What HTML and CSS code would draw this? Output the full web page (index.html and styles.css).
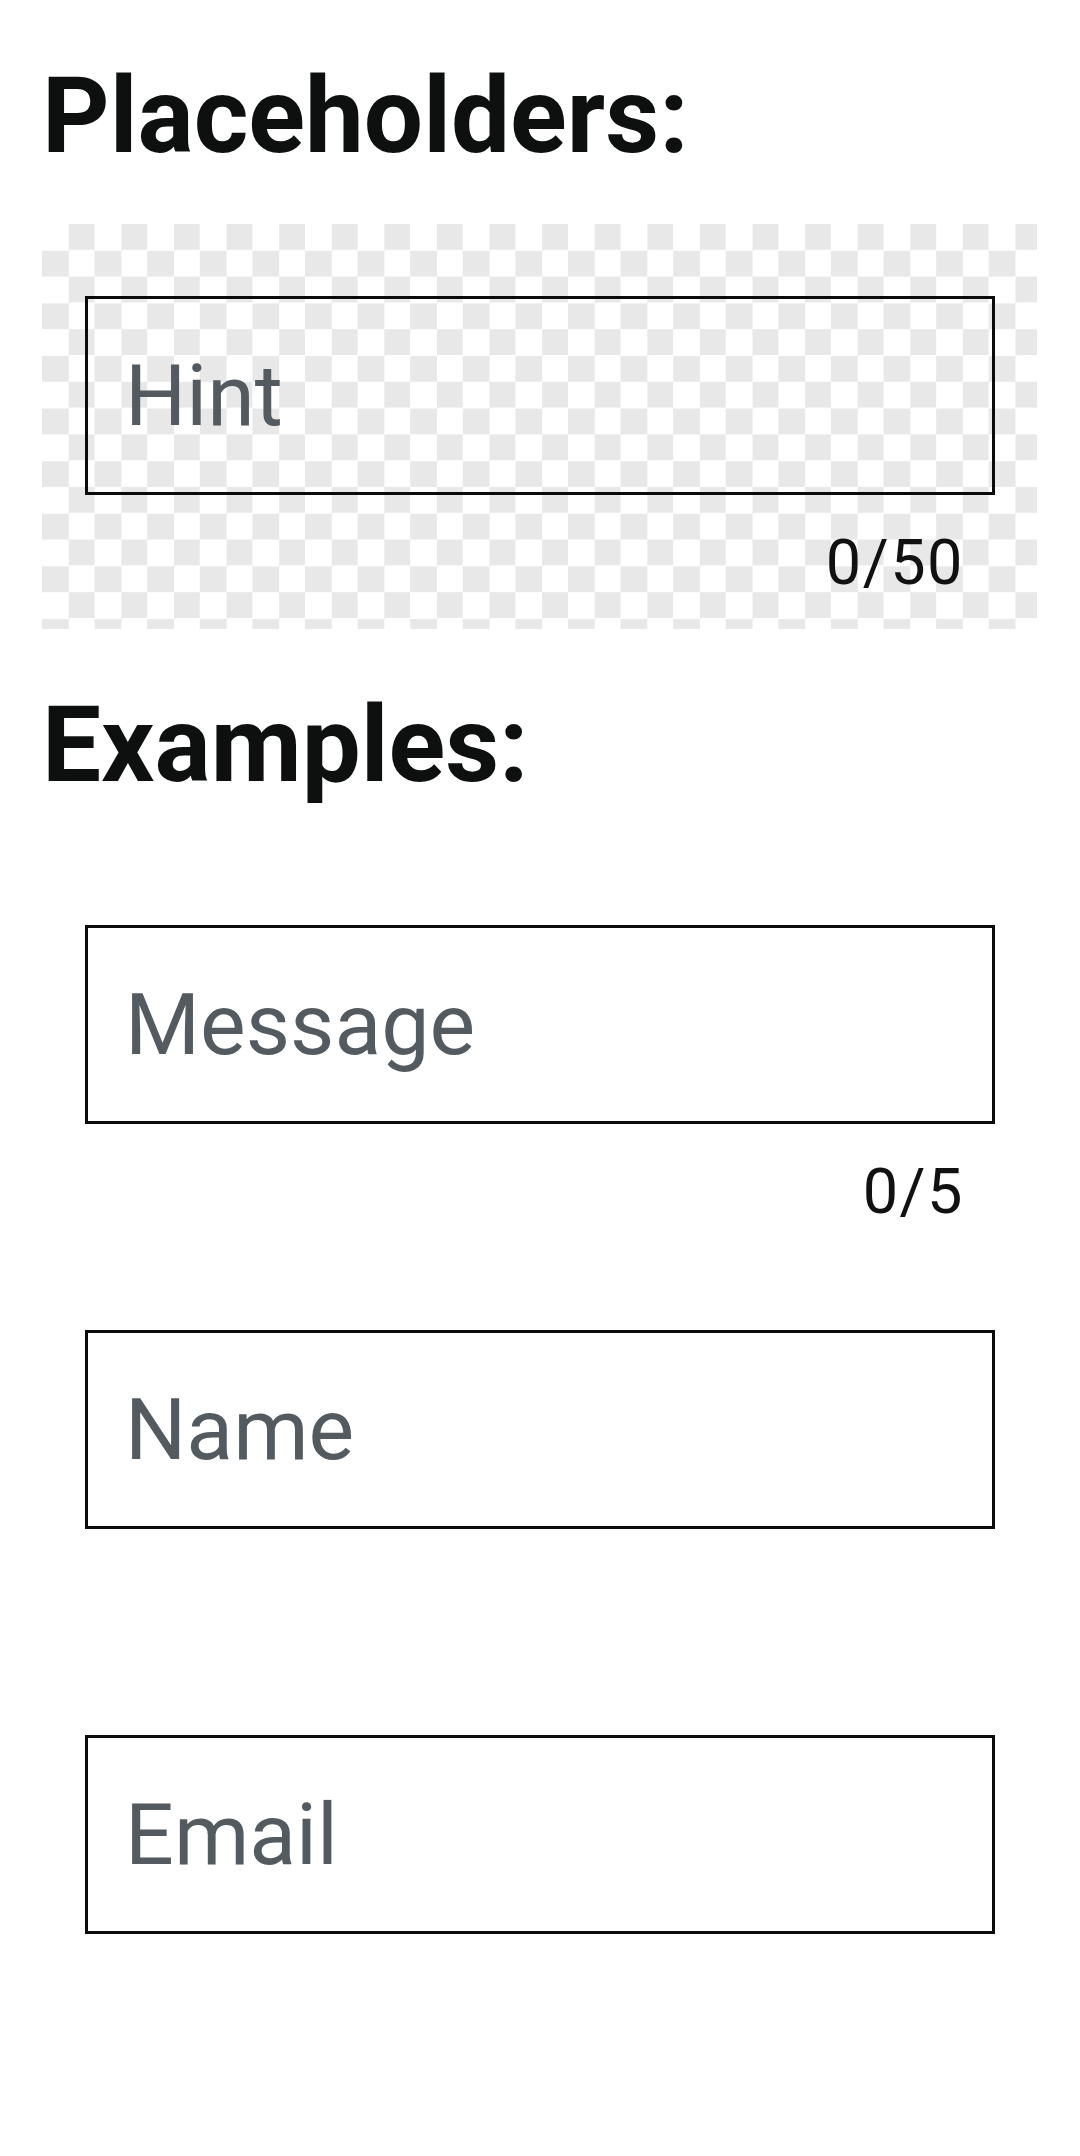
FILE: index.html
```html
<!DOCTYPE html>
<html lang="en">
<head>
<meta charset="utf-8">
<title>Placeholders</title>
<link rel="stylesheet" href="styles.css">
</head>
<body>
<main class="page">
  <section class="section">
    <h1 class="section-title">Placeholders:</h1>
    <div class="field field-checker">
      <div class="input"><span class="hint">Hint</span></div>
      <div class="counter">0/50</div>
    </div>
  </section>
  <section class="section">
    <h1 class="section-title">Examples:</h1>
    <div class="field">
      <div class="input"><span class="hint">Message</span></div>
      <div class="counter">0/5</div>
    </div>
    <div class="field">
      <div class="input"><span class="hint">Name</span></div>
      <div class="counter"></div>
    </div>
    <div class="field">
      <div class="input"><span class="hint">Email</span></div>
      <div class="counter"></div>
    </div>
  </section>
</main>
</body>
</html>
```
FILE: styles.css
```css
html, body {
  margin: 0;
  padding: 0;
  background: #ffffff;
}

body {
  font-family: Roboto, "Noto Sans", "Liberation Sans", sans-serif;
  width: 1080px;
  min-height: 2156px;
}

.page {
  padding: 0 43px 0 42px;
}

.section-title {
  margin: 0;
  padding-top: 57px;
  padding-bottom: 47px;
  font-size: 105px;
  line-height: 120px;
  font-weight: 700;
  color: #0e0f0f;
}

.field {
  padding: 72px 42px 30px 43px;
}

.field-checker {
  background-color: #ffffff;
  background-image: conic-gradient(#e8e8e8 0 25%, #ffffff 0 50%, #e8e8e8 0 75%, #ffffff 0);
  background-size: 52.6px 52.6px;
  background-position: 0 0;
}

.input {
  box-sizing: border-box;
  height: 199px;
  border: 3px solid #0b0b0b;
  display: flex;
  align-items: center;
  padding-left: 37px;
}

.hint {
  font-size: 86px;
  line-height: 100px;
  color: #535b60;
}

.counter {
  margin-top: 32px;
  height: 72px;
  line-height: 72px;
  font-size: 63px;
  letter-spacing: 1.5px;
  text-align: right;
  padding-right: 31px;
  color: #111111;
}
```
